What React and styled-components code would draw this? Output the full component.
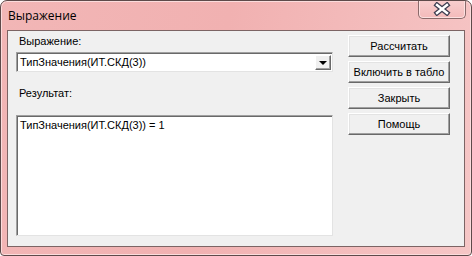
import React from 'react'
import styled, { createGlobalStyle } from 'styled-components'

const Global = createGlobalStyle`
  html, body {
    margin: 0;
    padding: 0;
    background: #ffffff;
  }
  * { box-sizing: border-box; }
`

const Window = styled.div`
  width: 472px;
  height: 256px;
  border: 1px solid #5e4a4a;
  border-radius: 7px 7px 4px 4px;
  background: linear-gradient(100deg, #f2b6b6 0%, #f1b1b1 45%, #f6c6c6 100%);
  display: flex;
  flex-direction: column;
  box-shadow: inset 0 0 0 1px #fbdcdc;
  overflow: hidden;
`

const TitleBar = styled.div`
  height: 29px;
  flex: none;
  display: flex;
  align-items: flex-start;
  justify-content: space-between;
  padding-left: 7px;
`

const Title = styled.span`
  font-family: "Open Sans", "Noto Sans", sans-serif;
  font-size: 12px;
  line-height: 29px;
  color: #000;
`

const CloseButton = styled.div`
  width: 48px;
  height: 19px;
  margin-right: 5px;
  margin-top: -1px;
  border: 1px solid #8a6a6a;
  border-top: none;
  border-radius: 0 0 5px 5px;
  background: linear-gradient(#f8cfcf, #f3baba);
  box-shadow: inset 0 0 0 1px #fbe0e0;
  display: flex;
  align-items: center;
  justify-content: center;
`

const Client = styled.div`
  flex: 1;
  margin: 0 6px 8px 6px;
  border: 1px solid #7c6464;
  background: #f0f0f0;
  display: flex;
  gap: 15px;
  padding: 4px 12px 10px 8px;
`

const LeftColumn = styled.div`
  width: 317px;
  display: flex;
  flex-direction: column;
`

const Label = styled.div`
  font-family: "Liberation Sans", Arial, sans-serif;
  font-size: 11px;
  line-height: 13px;
  color: #000;
  padding-left: 3px;
  margin-top: ${p => p.$top || 0}px;
`

const Combo = styled.div`
  margin-top: 4px;
  height: 20px;
  background: #fff;
  border: 1px solid;
  border-color: #a0a0a0 #e3e3e3 #e3e3e3 #a0a0a0;
  box-shadow: inset 1px 1px 0 #696969;
  display: flex;
  align-items: center;
  padding: 0 1px 0 3px;
`

const ComboText = styled.span`
  flex: 1;
  font-family: "Liberation Sans", Arial, sans-serif;
  font-size: 11px;
  color: #000;
  white-space: nowrap;
`

const ArrowButton = styled.div`
  width: 16px;
  height: 15px;
  margin-top: 1px;
  background: #f0f0f0;
  border: 1px solid;
  border-color: #ffffff #696969 #696969 #ffffff;
  box-shadow: inset -1px -1px 0 #a0a0a0;
  display: flex;
  align-items: center;
  justify-content: center;
`

const Arrow = styled.div`
  width: 0;
  height: 0;
  border-left: 4px solid transparent;
  border-right: 4px solid transparent;
  border-top: 4px solid #000;
  margin-left: -1px;
`

const ResultBox = styled.div`
  margin-top: 15px;
  flex: 1;
  background: #fff;
  border: 1px solid;
  border-color: #a0a0a0 #e3e3e3 #e3e3e3 #a0a0a0;
  box-shadow: inset 1px 1px 0 #696969;
  padding: 2px 3px;
  font-family: "Liberation Sans", Arial, sans-serif;
  font-size: 11px;
  line-height: 14px;
  color: #000;
`

const ButtonColumn = styled.div`
  width: 102px;
  display: flex;
  flex-direction: column;
  gap: 4px;
`

const Button = styled.div`
  height: 22px;
  background: #f0f0f0;
  border: 1px solid;
  border-color: #ffffff #696969 #696969 #ffffff;
  box-shadow: inset -1px -1px 0 #a0a0a0, inset 1px 1px 0 #e3e3e3;
  display: flex;
  align-items: center;
  justify-content: center;
  font-family: "Liberation Sans", Arial, sans-serif;
  font-size: 11px;
  color: #000;
  white-space: nowrap;
`

function CloseIcon() {
  return (
    <svg width="18" height="14" viewBox="0 0 18 14">
      <path d="M4 3 L14 11 M14 3 L4 11" stroke="#3f3f52" strokeWidth="5" strokeLinecap="square" />
      <path d="M4 3 L14 11 M14 3 L4 11" stroke="#ffffff" strokeWidth="2.4" strokeLinecap="square" />
    </svg>
  )
}

export default function App() {
  return (
    <>
      <Global />
      <Window>
        <TitleBar>
          <Title>Выражение</Title>
          <CloseButton>
            <CloseIcon />
          </CloseButton>
        </TitleBar>
        <Client>
          <LeftColumn>
            <Label>Выражение:</Label>
            <Combo>
              <ComboText>ТипЗначения(ИТ.СКД(3))</ComboText>
              <ArrowButton>
                <Arrow />
              </ArrowButton>
            </Combo>
            <Label $top={15}>Результат:</Label>
            <ResultBox>ТипЗначения(ИТ.СКД(3)) = 1</ResultBox>
          </LeftColumn>
          <ButtonColumn>
            <Button>Рассчитать</Button>
            <Button>Включить в табло</Button>
            <Button>Закрыть</Button>
            <Button>Помощь</Button>
          </ButtonColumn>
        </Client>
      </Window>
    </>
  )
}
